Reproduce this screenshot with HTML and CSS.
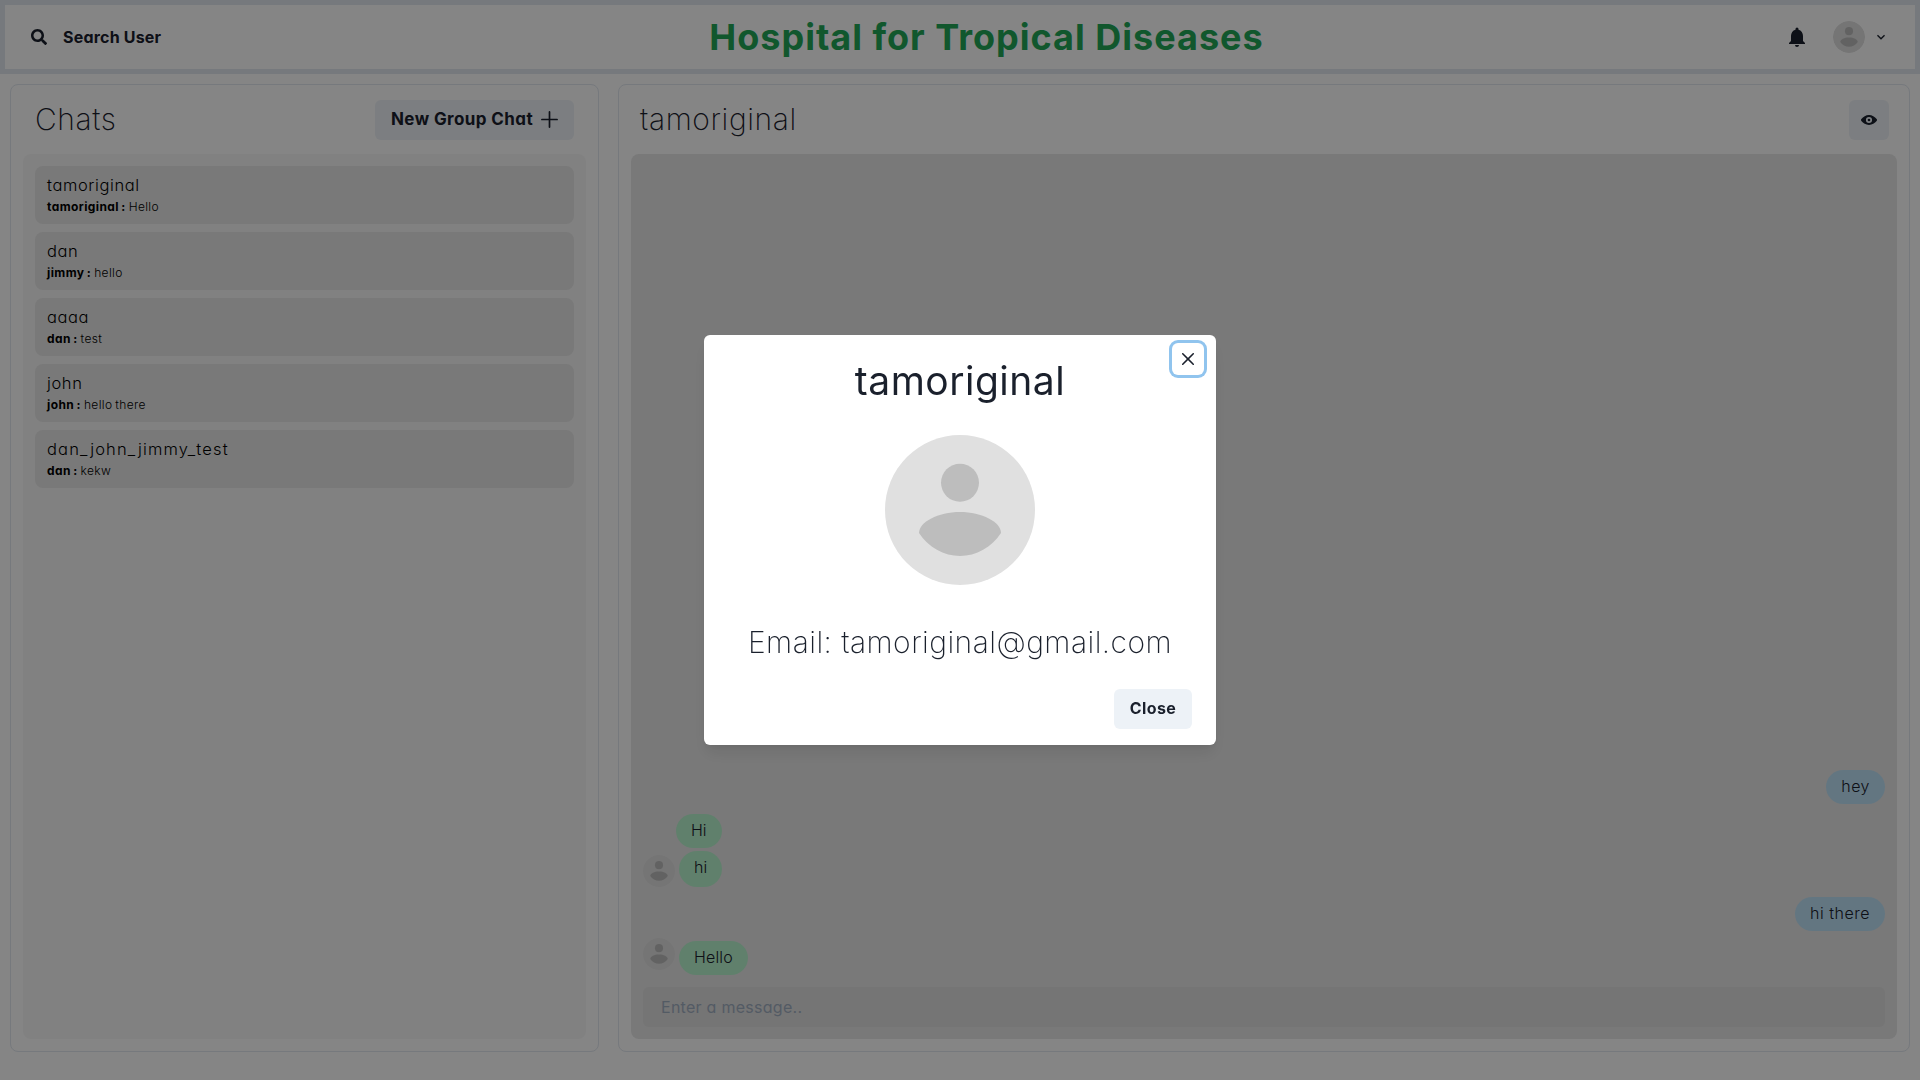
FILE: index.html
```html
<!DOCTYPE html>
<html lang="en">
<head>
<meta charset="utf-8">
<title>Hospital for Tropical Diseases</title>
<link rel="stylesheet" href="styles.css">
</head>
<body>
<svg class="defs" width="0" height="0">
  <symbol id="avatar" viewBox="0 0 150 150">
    <circle cx="75" cy="75" r="75" fill="#e0e0e0"/>
    <circle cx="75" cy="47.700" r="19" fill="#bdbdbd"/>
    <path d="M34 98C34 87 53 77 75 77S116 87 116 98C107 112 91 121 75 121S43 112 34 98Z" fill="#bdbdbd"/>
  </symbol>
</svg>

<header class="nav">
  <button class="search">
    <svg width="16" height="16" viewBox="0 0 512 512"><path fill="currentColor" d="M505 442.700 405.300 343c-4.500-4.500-10.600-7-17-7H372c27.600-35.300 44-79.700 44-128C416 93.100 322.900 0 208 0S0 93.100 0 208s93.100 208 208 208c48.300 0 92.700-16.400 128-44v16.300c0 6.400 2.500 12.500 7 17l99.700 99.700c9.400 9.400 24.600 9.400 33.900 0l28.300-28.300c9.400-9.400 9.400-24.600.1-34zM208 336c-70.700 0-128-57.200-128-128 0-70.700 57.200-128 128-128 70.700 0 128 57.200 128 128 0 70.700-57.200 128-128 128z"/></svg>
    <span>Search User</span>
  </button>
  <h1 class="brand">Hospital for Tropical Diseases</h1>
  <div class="nav-right">
    <svg width="24" height="24" viewBox="0 0 24 24"><path fill="currentColor" d="M12 22c1.100 0 2-.9 2-2H10A2 2 0 0 0 12 22Zm6-6V11c0-3.070-1.640-5.640-4.500-6.320V4a1.500 1.500 0 0 0-3 0v.68C7.630 5.360 6 7.920 6 11v5L4 18v1H20V18Z"/></svg>
    <svg class="avatar-sm" width="32" height="32"><use href="#avatar"/></svg>
    <svg width="16" height="16" viewBox="0 0 24 24"><path fill="currentColor" d="M16.590 8.590 12 13.170 7.410 8.590 6 10l6 6 6-6z"/></svg>
  </div>
</header>

<main class="board">
  <section class="panel chats">
    <div class="panel-head">
      <h2>Chats</h2>
      <button class="btn new-group"><span>New Group Chat</span>
        <svg width="17" height="17" viewBox="0 0 17 17"><path d="M8.500 .9V16.100M.9 8.500H16.100" stroke="currentColor" stroke-width="1.700" stroke-linecap="round"/></svg>
      </button>
    </div>
    <div class="chat-list">
      <div class="chat"><div class="name">tamoriginal</div><div class="last"><b>tamoriginal :</b> Hello</div></div>
      <div class="chat"><div class="name">dan</div><div class="last"><b>jimmy :</b> hello</div></div>
      <div class="chat"><div class="name">aaaa</div><div class="last"><b>dan :</b> test</div></div>
      <div class="chat"><div class="name">john</div><div class="last"><b>john :</b> hello there</div></div>
      <div class="chat"><div class="name name-wide">dan_john_jimmy_test</div><div class="last"><b>dan :</b> kekw</div></div>
    </div>
  </section>

  <section class="panel room">
    <div class="panel-head">
      <h2>tamoriginal</h2>
      <button class="btn icon-btn">
        <svg width="16" height="16" viewBox="0 0 24 24" fill="currentColor"><path d="M23.432 10.524C20.787 7.614 16.400 4.538 12 4.600 7.600 4.537 3.213 7.615.568 10.524a2.211 2.211 0 0 0 0 2.948C3.182 16.351 7.507 19.400 11.839 19.400h.308c4.347 0 8.671-3.049 11.288-5.929A2.210 2.210 0 0 0 23.432 10.524ZM7.400 12A4.600 4.600 0 1 1 12 16.600 4.600 4.600 0 0 1 7.400 12Z"/><circle cx="12" cy="12" r="2"/></svg>
      </button>
    </div>
    <div class="conversation">
      <div class="row mine"><span class="bubble">hey</span></div>
      <div class="row theirs follow"><span class="bubble">Hi</span></div>
      <div class="row theirs second"><svg class="avatar-sm" width="32" height="32"><use href="#avatar"/></svg><span class="bubble tall">hi</span></div>
      <div class="row mine"><span class="bubble">hi there</span></div>
      <div class="row theirs last-row"><svg class="avatar-sm" width="32" height="32"><use href="#avatar"/></svg><span class="bubble">Hello</span></div>
      <div class="composer">Enter a message..</div>
    </div>
  </section>
</main>

<div class="overlay">
  <div class="modal" role="dialog">
    <button class="close-x" aria-label="Close">
      <svg width="12" height="12" viewBox="0 0 24 24"><path fill="currentColor" d="M.439 21.440a1.500 1.500 0 0 0 2.122 2.121L11.823 14.300a.25.25 0 0 1 .354 0l9.262 9.263a1.500 1.500 0 1 0 2.122-2.121L14.300 12.177a.25.25 0 0 1 0-.354l9.263-9.262A1.500 1.500 0 0 0 21.439.44L12.177 9.700a.25.25 0 0 1-.354 0L2.561.44A1.500 1.500 0 0 0 .439 2.561L9.700 11.823a.25.25 0 0 1 0 .354Z"/></svg>
    </button>
    <h2 class="modal-title">tamoriginal</h2>
    <svg class="portrait" width="150" height="150"><use href="#avatar"/></svg>
    <p class="email">Email: tamoriginal@gmail.com</p>
    <button class="btn close-btn">Close</button>
  </div>
</div>
</body>
</html>
```
FILE: styles.css
```css
* { box-sizing: border-box; }
body {
  margin: 0;
  height: 100vh;
  overflow: hidden;
  background: #fff;
  color: #1a202c;
  font-family: Inter, "Liberation Sans", sans-serif;
  font-feature-settings: "cv11";
  font-size: 16px;
  line-height: 24px;
}
h1, h2, p { margin: 0; font-weight: 400; font-feature-settings: normal; }
button {
  display: flex;
  align-items: center;
  justify-content: center;
  border: 0;
  padding: 0;
  background: none;
  color: inherit;
  font: inherit;
  font-feature-settings: "cv11";
  white-space: nowrap;
}
svg { display: block; flex: none; }
.defs { position: absolute; }

.nav {
  display: flex;
  align-items: center;
  height: 74px;
  padding: 0 10px;
  border: 5px solid #e2e8f0;
}
.search {
  width: 173px;
  height: 40px;
  padding-left: 16px;
  gap: 16px;
  justify-content: flex-start;
  font-weight: 650;
  letter-spacing: 0.2px;
}
.search span { padding-bottom: 1px; }
.brand {
  flex: 1;
  color: #21a756;
  font-size: 36px;
  font-weight: 700;
  line-height: 54px;
  letter-spacing: 1px;
  text-align: center;
  white-space: nowrap;
}
.nav-right { display: flex; align-items: center; padding-right: 16px; }
.nav-right .avatar-sm { margin: 0 8px 0 24px; }
.avatar-sm { border-radius: 50%; }

.board {
  display: flex;
  justify-content: space-between;
  height: 988px;
  padding: 10px;
}
.panel {
  display: flex;
  flex-direction: column;
  padding: 12px;
  border: 1px solid #e2e8f0;
  border-radius: 8px;
}
.chats { width: 589px; }
.room { width: 1292px; }
.panel-head {
  display: flex;
  align-items: center;
  justify-content: space-between;
  height: 57px;
  padding: 3px 12px 14px;
}
.room .panel-head { padding: 3px 8px 14px 9px; }
.panel-head h2 {
  padding-bottom: 2px;
  font-size: 30px;
  font-weight: 200;
  line-height: 45px;
  letter-spacing: 0.6px;
}
.btn {
  height: 40px;
  padding: 0 16px 1px;
  border-radius: 6px;
  background: #edf2f7;
  font-weight: 650;
  letter-spacing: 0.4px;
}
.new-group { width: 199px; justify-content: space-between; font-size: 17px; }
.new-group span { padding-bottom: 1px; }
.icon-btn { width: 40px; padding: 0; }

.chat-list {
  display: flex;
  flex-direction: column;
  gap: 8px;
  flex: 1;
  padding: 12px;
  border-radius: 8px;
  background: #f8f8f8;
}
.chat {
  height: 58px;
  padding: 7px 12px;
  border-radius: 8px;
  background: #e8e8e8;
  color: #000;
}
.name { font-size: 16.5px; font-weight: 350; letter-spacing: 0.6px; }
.name-wide { letter-spacing: 1.15px; }
.last {
  padding-top: 1px;
  font-size: 12px;
  font-weight: 350;
  line-height: 18px;
  letter-spacing: 0.35px;
  word-spacing: -0.8px;
}
.last b { font-weight: 700; letter-spacing: 0.4px; }

.conversation {
  display: flex;
  flex-direction: column;
  justify-content: flex-end;
  flex: 1;
  padding: 12px;
  border-radius: 8px;
  background: #e8e8e8;
}
.row { display: flex; align-items: flex-start; }
.mine { justify-content: flex-end; }
.mine .bubble { background: #bee3f8; letter-spacing: 0.5px; }
.bubble {
  height: 34px;
  padding: 4px 15px;
  border-radius: 20px;
  background: #b9f5d0;
  font-weight: 350;
}
.follow { margin: 10px 0 3px 33px; }
.theirs .avatar-sm { margin-right: 4px; }
.second { margin-bottom: 10px; }
.second .avatar-sm { margin-top: 4px; }
.tall { height: 36px; }
.last-row { margin: 7px 0 12px; }
.last-row .bubble { margin-top: 3px; letter-spacing: 0.15px; }
.composer {
  height: 40px;
  padding: 8px 18px;
  border-radius: 6px;
  background: #e0e0e0;
  color: #a0aec0;
  letter-spacing: 0.27px;
}

.overlay {
  position: fixed;
  inset: 0;
  display: flex;
  align-items: center;
  justify-content: center;
  background: rgba(0, 0, 0, 0.48);
}
.modal {
  position: relative;
  display: flex;
  flex-direction: column;
  align-items: center;
  width: 512px;
  height: 410px;
  padding: 16px 24px;
  border-radius: 6px;
  background: #fff;
  box-shadow: 0 10px 15px -3px rgba(0, 0, 0, 0.1), 0 4px 6px -2px rgba(0, 0, 0, 0.05);
}
.close-x {
  position: absolute;
  top: 8px;
  right: 12px;
  width: 32px;
  height: 32px;
  border-radius: 6px;
  box-shadow: 0 0 0 3px #90c4ee;
}
.modal-title { font-size: 39px; font-weight: 400; line-height: 60px; letter-spacing: 0.5px; }
.portrait { margin-top: 24px; }
.email {
  margin-top: 35px;
  font-size: 30px;
  font-weight: 200;
  line-height: 45px;
  letter-spacing: 0.45px;
  white-space: nowrap;
}
.close-btn { width: 78px; margin-top: auto; padding-bottom: 2px; align-self: flex-end; }
```
